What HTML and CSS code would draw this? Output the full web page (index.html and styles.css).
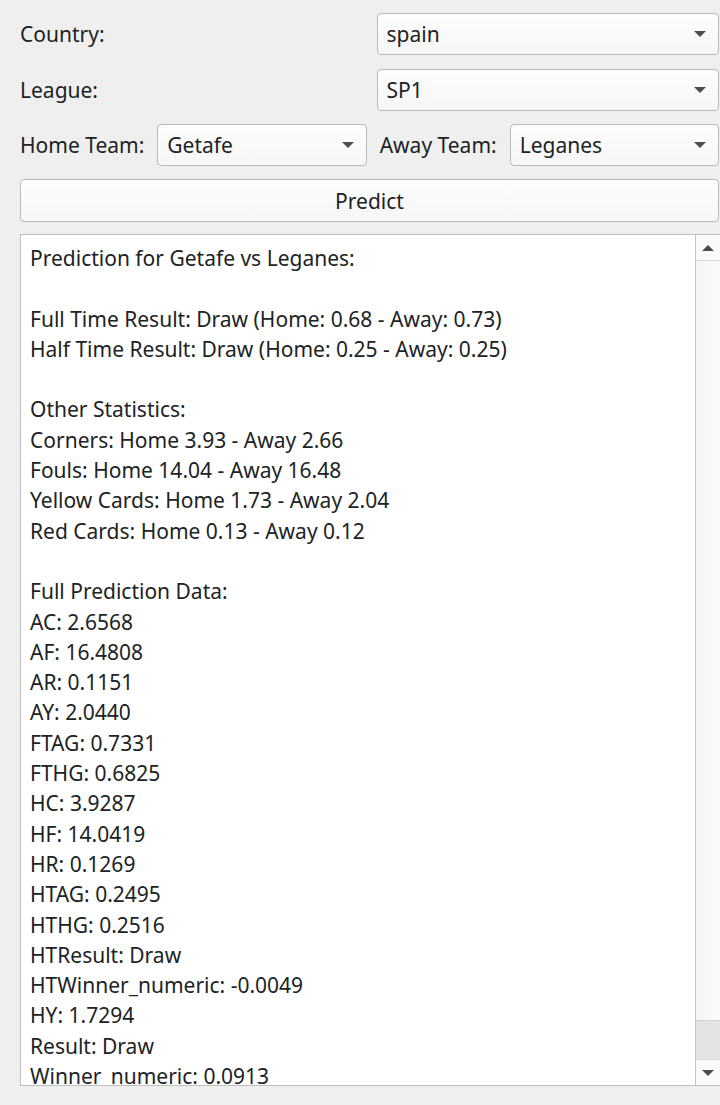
FILE: index.html
```html
<!DOCTYPE html>
<html>
<head>
<meta charset="utf-8">
<link rel="stylesheet" href="styles.css">
</head>
<body>
<div class="window">
  <div class="form-row">
    <div class="label">Country:</div>
    <div class="combo"><span class="combo-text">spain</span><span class="arrow"></span></div>
  </div>
  <div class="form-row">
    <div class="label">League:</div>
    <div class="combo"><span class="combo-text">SP1</span><span class="arrow"></span></div>
  </div>
  <div class="team-row">
    <div class="label">Home Team:</div>
    <div class="combo flex"><span class="combo-text">Getafe</span><span class="arrow"></span></div>
    <div class="label">Away Team:</div>
    <div class="combo flex"><span class="combo-text">Leganes</span><span class="arrow"></span></div>
  </div>
  <div class="button">Predict</div>
  <div class="output">
    <div class="output-text">
      <div class="line">Prediction for Getafe vs Leganes:</div>
      <div class="line"></div>
      <div class="line">Full Time Result: Draw (Home: 0.68 - Away: 0.73)</div>
      <div class="line">Half Time Result: Draw (Home: 0.25 - Away: 0.25)</div>
      <div class="line"></div>
      <div class="line">Other Statistics:</div>
      <div class="line">Corners: Home 3.93 - Away 2.66</div>
      <div class="line">Fouls: Home 14.04 - Away 16.48</div>
      <div class="line">Yellow Cards: Home 1.73 - Away 2.04</div>
      <div class="line">Red Cards: Home 0.13 - Away 0.12</div>
      <div class="line"></div>
      <div class="line">Full Prediction Data:</div>
      <div class="line">AC: 2.6568</div>
      <div class="line">AF: 16.4808</div>
      <div class="line">AR: 0.1151</div>
      <div class="line">AY: 2.0440</div>
      <div class="line">FTAG: 0.7331</div>
      <div class="line">FTHG: 0.6825</div>
      <div class="line">HC: 3.9287</div>
      <div class="line">HF: 14.0419</div>
      <div class="line">HR: 0.1269</div>
      <div class="line">HTAG: 0.2495</div>
      <div class="line">HTHG: 0.2516</div>
      <div class="line">HTResult: Draw</div>
      <div class="line">HTWinner_numeric: -0.0049</div>
      <div class="line">HY: 1.7294</div>
      <div class="line">Result: Draw</div>
      <div class="line">Winner_numeric: 0.0913</div>
    </div>
    <div class="scrollbar">
      <div class="sb-btn sb-up"><span class="tri-up"></span></div>
      <div class="sb-track"><div class="sb-thumb"></div></div>
      <div class="sb-btn sb-down"><span class="tri-down"></span></div>
    </div>
  </div>
</div>
</body>
</html>
```

FILE: styles.css
```css
html, body {
  margin: 0;
  padding: 0;
  background: #efefef;
}
body {
  width: 720px;
  height: 1105px;
  overflow: hidden;
  font-family: "Noto Sans", "Open Sans", sans-serif;
  font-size: 21px;
  color: #202324;
}
.window {
  padding: 13px 1px 0 20px;
  display: flex;
  flex-direction: column;
  gap: 13px;
}
.form-row {
  display: grid;
  grid-template-columns: 1fr 1fr;
  column-gap: 14px;
  align-items: center;
}
.form-row + .form-row {
  margin-top: 1px;
}
.team-row {
  display: flex;
  align-items: center;
  gap: 13px;
}
.label {
  white-space: nowrap;
}
.combo {
  height: 42px;
  box-sizing: border-box;
  border: 1px solid #bababa;
  border-radius: 4px;
  background: linear-gradient(#fdfdfd, #f6f6f6);
  display: flex;
  align-items: center;
  padding: 0 12px 0 9px;
}
.combo.flex {
  flex: 1;
  min-width: 0;
}
.combo-text {
  flex: 1;
}
.arrow {
  width: 0;
  height: 0;
  border-left: 6px solid transparent;
  border-right: 6px solid transparent;
  border-top: 6px solid #4f4f4f;
}
.button {
  height: 43px;
  box-sizing: border-box;
  border: 1px solid #bababa;
  border-radius: 4px;
  background: linear-gradient(#fdfdfd, #f6f6f6);
  display: flex;
  align-items: center;
  justify-content: center;
}
.output {
  height: 852px;
  margin-top: -1px;
  box-sizing: border-box;
  border: 1px solid #bdbdbd;
  border-right: none;
  background: #ffffff;
  display: flex;
  margin-right: -1px;
}
.output-text {
  flex: 1;
  overflow: hidden;
  padding: 8px 0 0 9px;
}
.line {
  height: 30.3px;
  line-height: 30.3px;
  white-space: pre;
}
.scrollbar {
  width: 24px;
  border-left: 1px solid #c4c4c4;
  display: flex;
  flex-direction: column;
  background: #f8f8f8;
}
.sb-btn {
  height: 25px;
  display: flex;
  align-items: center;
  justify-content: center;
  background: #fafafa;
}
.sb-up {
  border-bottom: 1px solid #dadada;
}
.sb-down {
  border-top: 1px solid #dadada;
}
.sb-track {
  flex: 1;
  display: flex;
  flex-direction: column;
  justify-content: flex-end;
  background: linear-gradient(90deg, #f4f4f4, #fbfbfb);
}
.sb-thumb {
  height: 38px;
  background: #e3e3e3;
  border-top: 1px solid #d4d4d4;
}
.tri-up {
  width: 0;
  height: 0;
  border-left: 6px solid transparent;
  border-right: 6px solid transparent;
  border-bottom: 6px solid #4a4a4a;
}
.tri-down {
  width: 0;
  height: 0;
  border-left: 6px solid transparent;
  border-right: 6px solid transparent;
  border-top: 6px solid #4a4a4a;
}
```
